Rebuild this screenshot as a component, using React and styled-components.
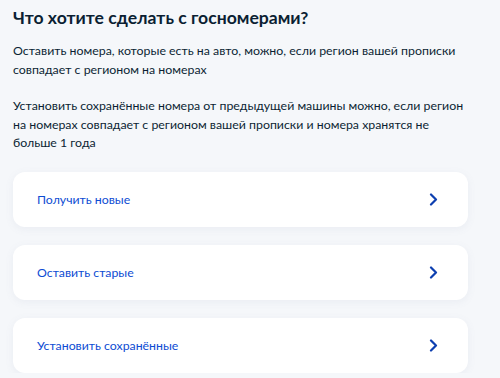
import React from "react";
import styled, { createGlobalStyle } from "styled-components";

const GlobalStyle = createGlobalStyle`
  html, body {
    margin: 0;
    padding: 0;
    background: #f5f7fa;
  }
  body {
    font-family: Lato, "Noto Sans", sans-serif;
    color: #0b1f33;
  }
`;

const Page = styled.div`
  width: 455px;
  padding: 4px 0 0 13px;
`;

const Title = styled.h2`
  margin: 0;
  font-size: 17.6px;
  line-height: 28px;
  font-weight: 700;
`;

const Text = styled.p`
  margin: ${(p) => p.$top}px 0 0;
  font-size: 12.35px;
  line-height: 18.5px;
`;

const Options = styled.ul`
  list-style: none;
  margin: 19px 0 0;
  padding: 0;
  display: flex;
  flex-direction: column;
  gap: 18px;
`;

const Card = styled.li`
  display: flex;
  align-items: center;
  justify-content: space-between;
  height: 55px;
  padding: 0 30px 0 24px;
  background: #fff;
  border-radius: 12px;
  box-shadow: 0 2px 8px rgba(102, 119, 153, 0.08);
  color: #0d4cd3;
  font-size: 12.3px;
`;

const Chevron = () => (
  <svg width="9" height="13" viewBox="0 0 9 13" fill="none">
    <path d="M2 1.5L7 6.5l-5 5" stroke="#0d3fb0" strokeWidth="2.2" strokeLinecap="round" strokeLinejoin="round" />
  </svg>
);

const options = ["Получить новые", "Оставить старые", "Установить сохранённые"];

export default function App() {
  return (
    <>
      <GlobalStyle />
      <Page>
        <Title>Что хотите сделать с госномерами?</Title>
        <Text $top={10}>
          Оставить номера, которые есть на авто, можно, если регион вашей прописки совпадает с регионом на номерах
        </Text>
        <Text $top={18}>
          Установить сохранённые номера от предыдущей машины можно, если регион на номерах совпадает с регионом вашей прописки и номера хранятся не больше 1 года
        </Text>
        <Options>
          {options.map((o) => (
            <Card key={o}>
              {o}
              <Chevron />
            </Card>
          ))}
        </Options>
      </Page>
    </>
  );
}
